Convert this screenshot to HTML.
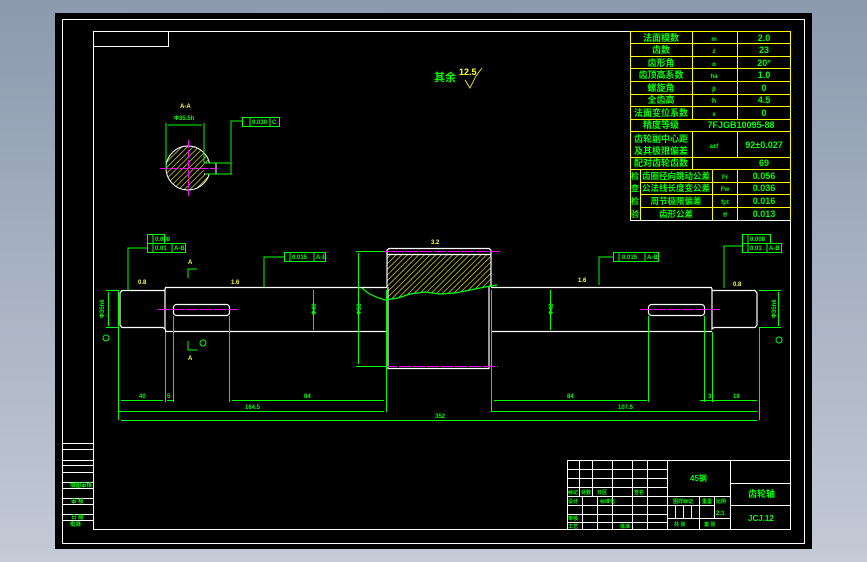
<!DOCTYPE html>
<html><head><meta charset="utf-8"><style>
html,body{margin:0;padding:0;width:867px;height:562px;overflow:hidden;background:linear-gradient(#8b9aae,#c4cad6);}
svg{position:absolute;left:0;top:0}
text{font-family:"Liberation Sans","Noto Sans CJK SC",sans-serif;font-weight:bold}
</style></head><body>
<svg width="867" height="562" viewBox="0 0 867 562" xmlns="http://www.w3.org/2000/svg">
<defs>
<pattern id="h" width="4" height="4" patternUnits="userSpaceOnUse" patternTransform="rotate(45)"><line x1="0" y1="0" x2="0" y2="4" stroke="#ffff33" stroke-width="1.2"/></pattern>
</defs>
<rect x="55" y="13" width="757" height="536" fill="#000"/>
<g fill="none" stroke="#fff" stroke-width="1">
<rect x="62.5" y="19.5" width="742" height="524"/>
<rect x="93.5" y="31.5" width="697" height="498"/>
<polyline points="93.5,46.5 168.5,46.5 168.5,31.5"/>
</g>
<g stroke="#fff" stroke-width="1">
<line x1="62" y1="443.5" x2="93" y2="443.5"/><line x1="62" y1="449.5" x2="93" y2="449.5"/>
<line x1="62" y1="460.5" x2="93" y2="460.5"/><line x1="62" y1="465.5" x2="93" y2="465.5"/>
<line x1="62" y1="472.5" x2="93" y2="472.5"/><line x1="62" y1="482.5" x2="93" y2="482.5"/>
<line x1="62" y1="488.5" x2="93" y2="488.5"/><line x1="62" y1="498.5" x2="93" y2="498.5"/>
<line x1="62" y1="504.5" x2="93" y2="504.5"/><line x1="62" y1="514.5" x2="93" y2="514.5"/>
<line x1="62" y1="520.5" x2="93" y2="520.5"/>
</g>
<g fill="#00ff00" font-size="5.5">
<text x="70" y="487">描图审核</text><text x="71" y="503">审 核</text><text x="71" y="519">日 期</text><text x="70" y="526">批准</text>
</g>
<g stroke="#ffff00" stroke-width="1" fill="none">
<rect x="630.5" y="31.5" width="160" height="189"/>
<line x1="630" y1="43.5" x2="791" y2="43.5"/><line x1="630" y1="56.5" x2="791" y2="56.5"/>
<line x1="630" y1="68.5" x2="791" y2="68.5"/><line x1="630" y1="81.5" x2="791" y2="81.5"/>
<line x1="630" y1="94.5" x2="791" y2="94.5"/><line x1="630" y1="106.5" x2="791" y2="106.5"/>
<line x1="630" y1="119.5" x2="791" y2="119.5"/><line x1="630" y1="131.5" x2="791" y2="131.5"/>
<line x1="630" y1="157.5" x2="791" y2="157.5"/><line x1="630" y1="169.5" x2="791" y2="169.5"/>
<line x1="640" y1="182.5" x2="791" y2="182.5"/><line x1="640" y1="194.5" x2="791" y2="194.5"/>
<line x1="640" y1="207.5" x2="791" y2="207.5"/>
<line x1="692.5" y1="31" x2="692.5" y2="119"/><line x1="692.5" y1="131" x2="692.5" y2="169"/>
<line x1="737.5" y1="31" x2="737.5" y2="119"/><line x1="737.5" y1="131" x2="737.5" y2="157"/>
<line x1="640.5" y1="169" x2="640.5" y2="220"/><line x1="712.5" y1="169" x2="712.5" y2="220"/>
<line x1="737.5" y1="169" x2="737.5" y2="220"/>
</g>
<line x1="630" y1="220.5" x2="791" y2="220.5" stroke="#fff"/>
<g fill="#00ff00" font-size="9" text-anchor="middle">
<text x="661" y="41">法面模数</text><text x="714" y="41" font-size="6">m</text><text x="764" y="41">2.0</text>
<text x="661" y="53">齿数</text><text x="714" y="53" font-size="6">z</text><text x="764" y="53">23</text>
<text x="661" y="66">齿形角</text><text x="714" y="66" font-size="6">α</text><text x="764" y="66">20°</text>
<text x="661" y="78">齿顶高系数</text><text x="714" y="78" font-size="6">ha</text><text x="764" y="78">1.0</text>
<text x="661" y="91">螺旋角</text><text x="714" y="91" font-size="6">β</text><text x="764" y="91">0</text>
<text x="661" y="103">全齿高</text><text x="714" y="103" font-size="7">h</text><text x="764" y="103">4.5</text>
<text x="661" y="116">法面变位系数</text><text x="714" y="116" font-size="6">x</text><text x="764" y="116">0</text>
<text x="661" y="128">精度等级</text><text x="741" y="128">7FJGB10095-88</text>
<text x="661" y="142">齿轮副中心距</text><text x="661" y="154">及其极限偏差</text><text x="714" y="148" font-size="6">a±f</text><text x="764" y="148">92±0.027</text>
<text x="661" y="166">配对齿轮齿数</text><text x="764" y="166">69</text>
<text x="676" y="179" font-size="8.5">齿圈径向跳动公差</text><text x="725" y="179" font-size="6">Fr</text><text x="764" y="179">0.056</text>
<text x="676" y="191" font-size="8.5">公法线长度变公差</text><text x="725" y="191" font-size="6">Fw</text><text x="764" y="191">0.036</text>
<text x="676" y="204" font-size="8.5">周节极限偏差</text><text x="725" y="204" font-size="6">fpt</text><text x="764" y="204">0.016</text>
<text x="676" y="217" font-size="8.5">齿形公差</text><text x="725" y="217" font-size="6">ff</text><text x="764" y="217">0.013</text>
<text x="635" y="179" font-size="8">检</text><text x="635" y="191" font-size="8">查</text><text x="635" y="204" font-size="8">检</text><text x="635" y="217" font-size="8">验</text>
</g>
<g fill="#00ff00"><text x="434" y="81" font-size="11">其余</text></g>
<text x="459" y="75" fill="#ffff33" font-size="9" font-weight="normal">12.5</text>
<polyline points="465,80 470,88 476,76 482,68" fill="none" stroke="#ffff33" stroke-width="0.8"/>
<text x="180" y="108" fill="#ffff33" font-size="6">A-A</text>
<text x="174" y="120" fill="#00ff00" font-size="6">Φ35.5h</text>
<circle cx="188" cy="168" r="22" fill="url(#h)" stroke="#fff" stroke-width="1"/>
<rect x="204" y="163" width="12" height="11" fill="#000"/>
<polyline points="204,163 216,163 216,174 204,174" fill="none" stroke="#fff"/>
<g stroke="#00ff00" fill="none" stroke-width="1">
<line x1="166" y1="123" x2="166" y2="170"/><line x1="204" y1="123" x2="204" y2="163"/><line x1="168" y1="125" x2="202" y2="125"/>
<line x1="205" y1="163" x2="232" y2="163"/><line x1="205" y1="174" x2="232" y2="174"/><line x1="231" y1="163" x2="231" y2="174"/>
<polyline points="231,162 231,121 242,121"/>
<rect x="242.5" y="117.5" width="37" height="9"/><line x1="250" y1="117" x2="250" y2="126"/><line x1="270" y1="117" x2="270" y2="126"/>
</g>
<g stroke="#ff00ff" stroke-width="1"><line x1="160" y1="168.5" x2="217" y2="168.5" stroke-dasharray="8,2"/><line x1="188.5" y1="140" x2="188.5" y2="196" stroke-dasharray="8,2"/></g>
<text x="252" y="124" fill="#00ff00" font-size="6">0.030</text><text x="272" y="124" fill="#00ff00" font-size="6">C</text>
<rect x="387" y="255" width="104" height="32" fill="url(#h)"/>
<path d="M364,287 L387,287 L387,300 L398,298 L410,294 L425,292 L440,294 L455,293 L470,290 L485,287 L491,287 L497,287 Z" fill="url(#h)"/>
<g fill="none" stroke="#fff" stroke-width="1.2">
<polyline points="165,287.5 387,287.5"/><polyline points="491,287.5 712,287.5"/>
<polyline points="165,331.5 387,331.5"/><polyline points="491,331.5 712,331.5"/>
<polyline points="166,331 165,329 165,289 166,287"/>
<polyline points="165,290.5 122,290.5 120,293 120,325 122,327.5 163,327.5 165,329"/>
<polyline points="711,287 712,289 712,329 714,327.5 755,327.5 757,325 757,293 755,290.5 712,290.5"/>
<polyline points="387,287 387,250 389,248.5 489,248.5 491,250 491,287"/>
<line x1="387" y1="254.5" x2="491" y2="254.5"/>
<polyline points="388,287 388,368.5 489,368.5 489,287"/>
<rect x="173.5" y="304.5" width="56" height="11" rx="3"/>
<rect x="648.5" y="304.5" width="56" height="11" rx="3"/>
</g>
<polyline points="362,288 368,293 376,297 385,300 398,298 410,294 425,292 440,294 455,293 470,290 485,287 497,285" fill="none" stroke="#00ff00" stroke-width="1.2"/>
<g stroke="#ff00ff" stroke-width="1" stroke-dasharray="12,2">
<line x1="158" y1="309.5" x2="238" y2="309.5"/><line x1="640" y1="309.5" x2="720" y2="309.5"/>
<line x1="378" y1="251.5" x2="500" y2="251.5"/><line x1="385" y1="366.5" x2="498" y2="366.5"/>
</g>
<g stroke="#00ff00" fill="none" stroke-width="1">
<line x1="118.5" y1="290" x2="118.5" y2="420"/><line x1="106" y1="290.5" x2="118" y2="290.5"/><line x1="106" y1="327.5" x2="118" y2="327.5"/><line x1="108.5" y1="292" x2="108.5" y2="326"/>
<line x1="165.5" y1="332" x2="165.5" y2="402"/><line x1="173.5" y1="316" x2="173.5" y2="402"/><line x1="229.5" y1="316" x2="229.5" y2="402"/>
<line x1="386.5" y1="290" x2="386.5" y2="412"/><line x1="491.5" y1="290" x2="491.5" y2="412"/>
<line x1="648.5" y1="316" x2="648.5" y2="402"/><line x1="704.5" y1="316" x2="704.5" y2="402"/><line x1="712.5" y1="332" x2="712.5" y2="402"/><line x1="759.5" y1="328" x2="759.5" y2="420"/>
<line x1="759" y1="290.5" x2="781" y2="290.5"/><line x1="759" y1="327.5" x2="781" y2="327.5"/><line x1="778.5" y1="292" x2="778.5" y2="326"/>
<line x1="121" y1="400.5" x2="163" y2="400.5"/><line x1="167" y1="400.5" x2="173" y2="400.5"/><line x1="232" y1="400.5" x2="384" y2="400.5"/>
<line x1="494" y1="400.5" x2="647" y2="400.5"/><line x1="700" y1="400.5" x2="757" y2="400.5"/>
<line x1="119" y1="411.5" x2="384" y2="411.5"/><line x1="492" y1="411.5" x2="757" y2="411.5"/>
<line x1="121" y1="420.5" x2="757" y2="420.5"/>
<line x1="356" y1="251.5" x2="384" y2="251.5"/><line x1="356" y1="366.5" x2="386" y2="366.5"/><line x1="358.5" y1="253" x2="358.5" y2="364"/>
<line x1="313.5" y1="290" x2="313.5" y2="330"/><line x1="550.5" y1="290" x2="550.5" y2="330"/>
<polyline points="128,290 128,248 148,248"/><rect x="147.5" y="234.5" width="17" height="9"/><rect x="147.5" y="243.5" width="38" height="9"/>
<line x1="153" y1="234" x2="153" y2="252"/><line x1="172" y1="243" x2="172" y2="252"/>
<polyline points="264,287 264,257 284,257"/><rect x="284.5" y="252.5" width="41" height="9"/><line x1="290" y1="252" x2="290" y2="261"/><line x1="314" y1="252" x2="314" y2="261"/>
<polyline points="599,285 599,257 613,257"/><rect x="613.5" y="252.5" width="45" height="9"/><line x1="619" y1="252" x2="619" y2="261"/><line x1="645" y1="252" x2="645" y2="261"/>
<polyline points="724,288 724,246 742,246"/><rect x="742.5" y="234.5" width="28" height="9"/><rect x="742.5" y="243.5" width="39" height="9"/>
<line x1="748" y1="234" x2="748" y2="252"/><line x1="767" y1="243" x2="767" y2="252"/>
<polyline points="188,278 188,269 197,269"/><polyline points="188,341 188,350 197,350"/>
</g>
<g fill="#00ff00" font-size="6">
<text x="155" y="241">0.008</text><text x="155" y="250">0.01</text><text x="174" y="250">A-B</text>
<text x="292" y="259">0.015</text><text x="316" y="259">A-B</text>
<text x="622" y="259">0.015</text><text x="647" y="259">A-B</text>
<text x="750" y="241">0.008</text><text x="750" y="250">0.01</text><text x="769" y="250">A-B</text>
<text x="139" y="398">40</text><text x="167" y="398">5</text><text x="304" y="398">84</text><text x="567" y="398">84</text><text x="708" y="398">3</text><text x="733" y="398">18</text>
<text x="245" y="409">164.5</text><text x="618" y="409">107.5</text><text x="435" y="418">352</text>
<text x="231" y="284" fill="#ffff33">1.6</text><text x="138" y="284" fill="#ffff33">0.8</text><text x="578" y="282" fill="#ffff33">1.6</text><text x="733" y="286" fill="#ffff33">0.8</text><text x="431" y="244" fill="#ffff33">3.2</text>
<text x="188" y="264" fill="#ffff33">A</text><text x="188" y="360" fill="#ffff33">A</text>
</g>
<g fill="#00ff00" font-size="6">
<text transform="translate(104,318) rotate(-90)">Φ35h6</text>
<text transform="translate(316,315) rotate(-90)">Φ40</text>
<text transform="translate(361,315) rotate(-90)">Φ50</text>
<text transform="translate(553,315) rotate(-90)">Φ40</text>
<text transform="translate(776,318) rotate(-90)">Φ35h6</text>
</g>
<g fill="none" stroke="#00ff00"><circle cx="106" cy="338" r="3"/><circle cx="203" cy="343" r="3"/><circle cx="779" cy="340" r="3"/></g>
<g stroke="#fff" stroke-width="1" fill="none">
<rect x="567.5" y="460.5" width="223" height="69"/>
<line x1="667.5" y1="460" x2="667.5" y2="530"/><line x1="730.5" y1="460" x2="730.5" y2="530"/>
<line x1="730" y1="483.5" x2="791" y2="483.5"/><line x1="730" y1="505.5" x2="791" y2="505.5"/>
<line x1="667" y1="496.5" x2="730" y2="496.5"/><line x1="667" y1="518.5" x2="730" y2="518.5"/>
<line x1="699.5" y1="496" x2="699.5" y2="530"/><line x1="714.5" y1="496" x2="714.5" y2="518"/>
<line x1="675.5" y1="505" x2="675.5" y2="518"/><line x1="683.5" y1="505" x2="683.5" y2="518"/><line x1="691.5" y1="505" x2="691.5" y2="518"/><line x1="667" y1="505.5" x2="714" y2="505.5"/>
<line x1="567" y1="469.5" x2="667" y2="469.5"/><line x1="567" y1="478.5" x2="667" y2="478.5"/><line x1="567" y1="487.5" x2="667" y2="487.5"/>
<line x1="567" y1="496.5" x2="667" y2="496.5"/><line x1="567" y1="505.5" x2="667" y2="505.5"/><line x1="567" y1="514.5" x2="667" y2="514.5"/><line x1="567" y1="522.5" x2="667" y2="522.5"/>
<line x1="579.5" y1="460" x2="579.5" y2="496"/><line x1="592.5" y1="460" x2="592.5" y2="496"/><line x1="612.5" y1="460" x2="612.5" y2="530"/>
<line x1="632.5" y1="460" x2="632.5" y2="530"/><line x1="647.5" y1="460" x2="647.5" y2="530"/>
<line x1="582.5" y1="496" x2="582.5" y2="530"/><line x1="597.5" y1="496" x2="597.5" y2="530"/>
</g>
<g fill="#00ff00" font-size="6">
<text x="690" y="481" font-size="8">45钢</text><text x="748" y="497" font-size="9">齿轮轴</text><text x="748" y="521" font-size="8">JCJ.12</text>
<text x="673" y="503" font-size="5">图样标记</text><text x="702" y="503" font-size="5">重量</text><text x="716" y="503" font-size="5">比例</text>
<text x="716" y="515">2:1</text><text x="674" y="526" font-size="5">共 张</text><text x="704" y="526" font-size="5">第 张</text>
<text x="568" y="494" font-size="5">标记</text><text x="581" y="494" font-size="5">处数</text><text x="597" y="494" font-size="5">分区</text><text x="634" y="494" font-size="5">签名</text>
<text x="568" y="503" font-size="5">设计</text><text x="600" y="503" font-size="5">标准化</text>
<text x="568" y="520" font-size="5">审核</text><text x="568" y="528" font-size="5">工艺</text><text x="620" y="528" font-size="5">批准</text>
</g>
</svg>
</body></html>
